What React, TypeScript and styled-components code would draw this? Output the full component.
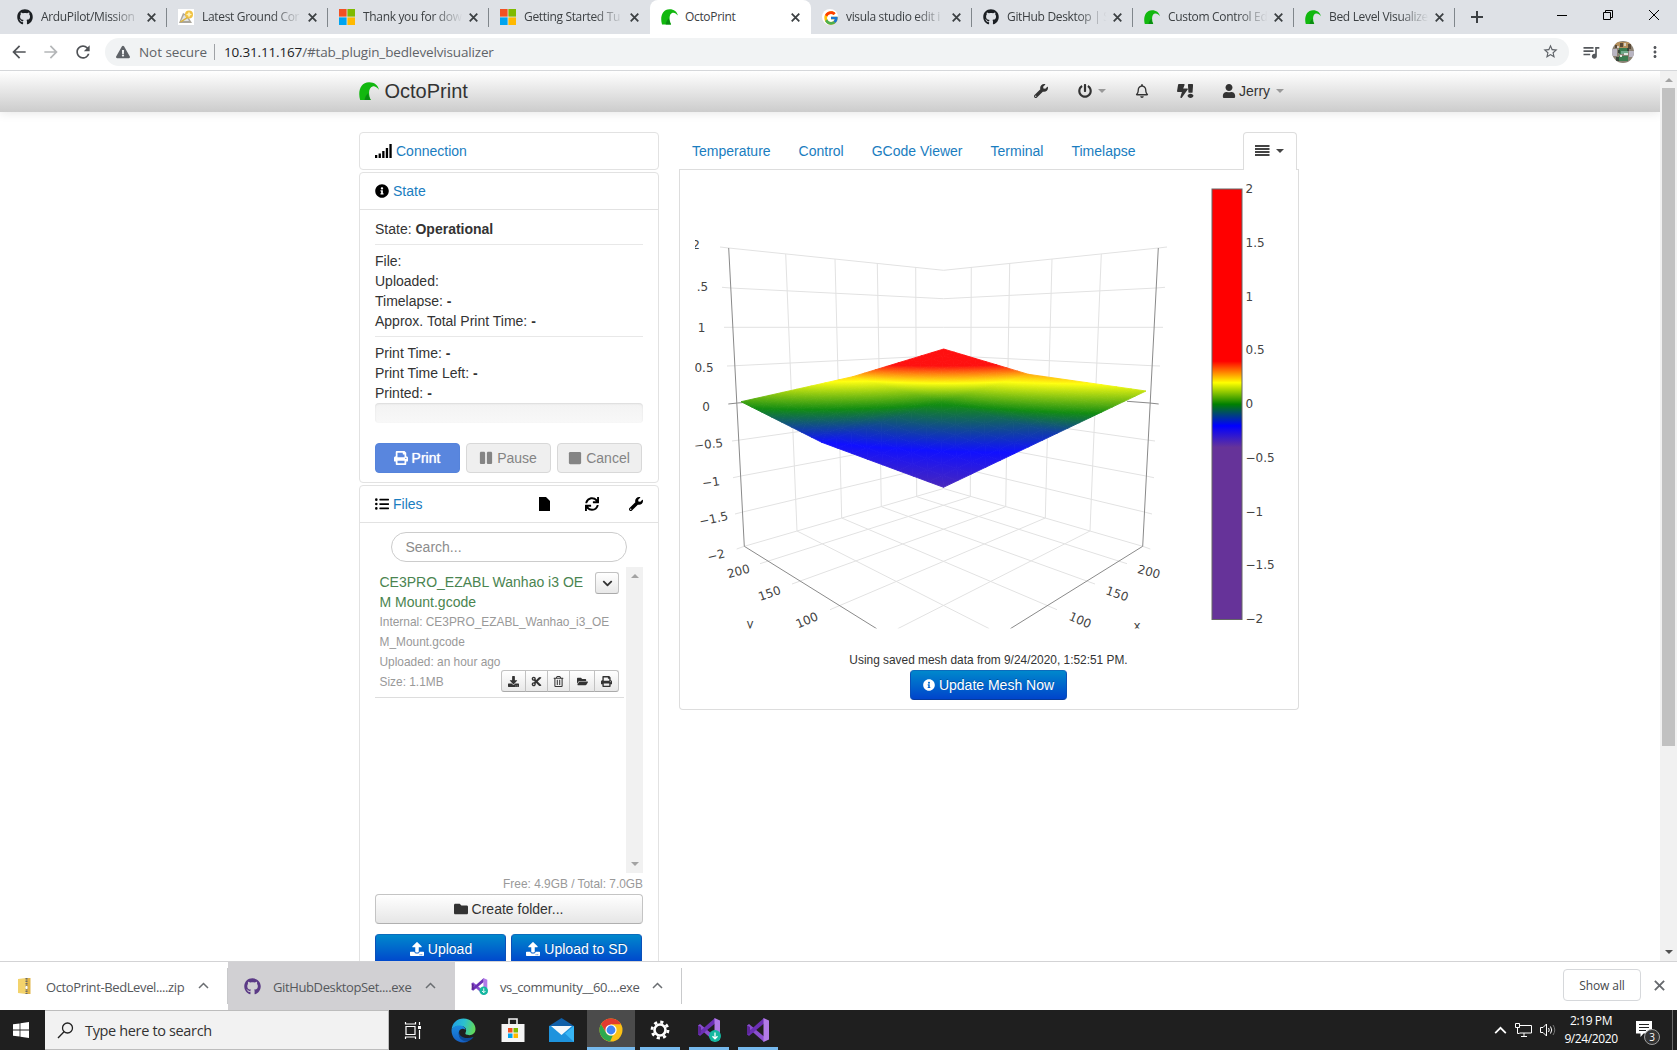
import React from 'react';
import styled, { createGlobalStyle, css } from 'styled-components';
import {
  FaBolt, FaChevronDown, FaCut, FaDownload, FaExclamation, FaExclamationTriangle,
  FaFolder, FaFolderOpen, FaGithub, FaInfoCircle, FaListUl, FaPause, FaPowerOff, FaPrint,
  FaRegBell, FaRegTrashAlt, FaStop, FaSync, FaUpload, FaUser, FaWrench,
} from 'react-icons/fa';
import {
  MdArrowBack, MdArrowForward, MdMoreVert, MdOutlineQueueMusic, MdRefresh, MdStarBorder,
} from 'react-icons/md';
import { FcGoogle } from 'react-icons/fc';

const GlobalStyle = createGlobalStyle`
  *, *::before, *::after { box-sizing: border-box; }
  html, body { margin: 0; padding: 0; overflow: hidden; background: #fff; }
  svg { display: block; flex: none; }
`;

const SYSTEM_FONT = `"Open Sans", "Noto Sans", sans-serif`;
const PAGE_FONT = `"Liberation Sans", Arial, sans-serif`;
const LINK = '#1a7dc0';

const Screen = styled.div`
  width: 1677px;
  height: 1050px;
  display: flex;
  flex-direction: column;
  overflow: hidden;
  font-family: ${SYSTEM_FONT};
`;

/* ---------- Browser frame ---------- */

const TabStrip = styled.div`
  height: 34px;
  flex: none;
  display: flex;
  padding-left: 6px;
  background: #dee1e6;
`;

const BrowserTab = styled.div<{ $active?: boolean; $divider?: boolean }>`
  position: relative;
  width: 161px;
  height: 34px;
  flex: none;
  display: flex;
  align-items: center;
  padding-left: 11px;
  ${p => p.$active && css`
    background: #fff;
    border-radius: 8px 8px 0 0;
  `}
  ${p => p.$divider && css`
    &::after {
      content: '';
      position: absolute;
      right: 0;
      top: 8px;
      width: 1px;
      height: 19px;
      background: #80868b;
    }
  `}
`;

const Favicon = styled.div`
  width: 24px;
`;

const TabTitle = styled.span<{ $fade?: boolean }>`
  width: 105.5px;
  white-space: nowrap;
  font-size: 12px;
  line-height: 18px;
  letter-spacing: -0.33px;
  color: #3c4043;
  ${p => p.$fade && css`mask-image: linear-gradient(90deg, #000 66%, transparent 94%);`}
`;

const NewTab = styled.div`
  width: 43px;
  display: flex;
  align-items: center;
  justify-content: center;
`;

const WindowControls = styled.div`
  margin-left: auto;
  display: flex;
  height: 29px;
`;

const WindowControl = styled.div`
  width: 46px;
  display: flex;
  align-items: center;
  justify-content: center;
`;

const Toolbar = styled.div`
  height: 37px;
  flex: none;
  display: flex;
  align-items: center;
  padding: 0 5px 1px 8px;
  border-bottom: 1px solid #d5d7da;
  background: #fff;
  color: #55585c;
`;

const NavIcon = styled.div<{ $dim?: boolean }>`
  width: 32px;
  display: flex;
  padding-left: 1px;
  color: ${p => (p.$dim ? '#b4b6b8' : '#505357')};
  svg { width: 20px; height: 20px; }
`;

const Omnibox = styled.div`
  width: 1464px;
  height: 28px;
  flex: none;
  margin-left: 1px;
  display: flex;
  align-items: center;
  padding: 0 10px 0 11px;
  border-radius: 14px;
  background: #f1f3f4;
  font-size: 14px;
  color: #5f6368;
`;

const Secure = styled.span`
  margin-left: 9px;
  padding-right: 7px;
  line-height: 16px;
  font-size: 13.5px;
  letter-spacing: -0.05px;
  border-right: 1px solid #9fa2a6;
`;

const Url = styled.span`
  margin-left: 9px;
  flex: 1;
  font-size: 13.5px;
  letter-spacing: -0.16px;
  b { font-weight: 400; color: #202124; }
`;

const ToolbarIcon = styled.div`
  width: 32px;
  display: flex;
  justify-content: center;
`;

const ToolbarActions = styled.div`
  margin-left: 6px;
  display: flex;
  align-items: center;
`;

/* ---------- OctoPrint page ---------- */

const Viewport = styled.div`
  height: 890px;
  flex: none;
  display: flex;
  overflow: hidden;
  font: 14px/20px ${PAGE_FONT};
  color: #333;
`;

const Page = styled.div`
  width: 1660px;
  flex: none;
`;

const Navbar = styled.div`
  height: 41px;
  padding: 0 0 1px 359px;
  display: flex;
  align-items: center;
  background: linear-gradient(#fff, #cccccc);
  box-shadow: 0 1px 10px rgba(0, 0, 0, 0.1);
`;

const Brand = styled.div`
  width: 662px;
  display: flex;
  align-items: center;
  gap: 5.5px;
  font-size: 20px;
`;

const NavItem = styled.div<{ $width: number }>`
  width: ${p => p.$width}px;
  display: flex;
  align-items: center;
  gap: 3px;
  padding-left: 13px;
  svg { height: 14px; width: auto; }
`;

const BoltPair = styled.div`
  display: flex;
  margin-left: -1px;
  svg:first-child { width: 11px; }
  svg:last-child { width: 7px; margin-left: -1px; }
`;

const Caret = styled.i<{ $color: string; $gap?: number }>`
  width: 0;
  height: 0;
  margin-left: ${p => p.$gap ?? 0}px;
  border: 4px solid transparent;
  border-top-color: ${p => p.$color};
  border-bottom: 0;
`;

const Container = styled.div`
  width: 940px;
  margin: 20px 0 0 359px;
  display: flex;
  align-items: flex-start;
  gap: 20px;
`;

const Sidebar = styled.div`
  width: 300px;
  display: flex;
  flex-direction: column;
  gap: 2px;
`;

const Group = styled.section`
  border: 1px solid #e2e2e2;
  border-radius: 4px;
`;

const GroupHeading = styled.div`
  height: 36px;
  display: flex;
  align-items: center;
  gap: 4px;
  padding: 0 15px;
  color: ${LINK};
  svg { height: 14px; width: auto; color: #000; }
`;

const HeadingActions = styled.div`
  margin-left: auto;
  display: flex;
  align-items: center;
  svg:nth-child(1) { margin-right: 35px; }
  svg:nth-child(2) { margin-right: 30px; }
`;

const GroupBody = styled.div`
  padding: 9px 15px;
  border-top: 1px solid #e2e2e2;
`;

const Rule = styled.hr`
  margin: 5px 0 6px;
  border: 0;
  border-top: 1px solid #e8e8e8;
`;

const Line = styled.div`
  height: 20px;
`;

const Progress = styled.div`
  height: 20px;
  margin-bottom: 20px;
  border-radius: 4px;
  background: linear-gradient(#f3f3f3, #f8f8f8);
  box-shadow: inset 0 1px 2px rgba(0, 0, 0, 0.1);
`;

const Row = styled.div<{ $gap: number; $top?: number }>`
  display: flex;
  gap: ${p => p.$gap}px;
  margin-top: ${p => p.$top ?? 0}px;
`;

const Button = styled.button<{ $kind: 'primary' | 'default' | 'primaryOff' | 'off'; $width: number; $icon?: number }>`
  width: ${p => p.$width}px;
  height: 30px;
  display: flex;
  align-items: center;
  justify-content: center;
  gap: 4px;
  padding: 0 1px 0 0;
  border: 1px solid #c4c4c4;
  border-bottom-color: #b0b0b0;
  border-radius: 4px;
  font: 14px/20px ${PAGE_FONT};
  svg { height: ${p => p.$icon ?? 14}px; width: auto; }
  ${p => p.$kind === 'primary' && css`
    padding: 0 0 0 1px;
    color: #fff;
    border-color: #0b6cbd #0a50b8 #063a9c;
    background: linear-gradient(#0088cc, #0044cc);
    text-shadow: 0 -1px 0 rgba(0, 0, 0, 0.25);
  `}
  ${p => p.$kind === 'default' && css`
    color: #333;
    background: linear-gradient(#fff, #e6e6e6);
  `}
  ${p => p.$kind === 'primaryOff' && css`
    color: #fff;
    border-color: #5583db;
    background: #5986de;
    text-shadow: 0 0 1px #fff;
  `}
  ${p => p.$kind === 'off' && css`
    color: #848484;
    border-color: #d8d8d8;
    background: #efefef;
  `}
`;

const FilesBody = styled.div`
  padding: 9px 15px 0;
  border-top: 1px solid #e2e2e2;
`;

const Search = styled.div`
  width: 236px;
  height: 30px;
  margin: 0 auto 5px 16px;
  padding: 4px 13.5px;
  border: 1px solid #ccc;
  border-radius: 15px;
  color: #8c8c8c;
`;

const FileScroller = styled.div`
  height: 306px;
  display: flex;
  justify-content: space-between;
`;

const FileEntry = styled.div`
  width: 249px;
  height: 131px;
  padding: 5px 5px 0 4.5px;
  border-bottom: 1px solid #ddd;
`;

const EntryTop = styled.div`
  display: flex;
  justify-content: space-between;
`;

const FileName = styled.div`
  white-space: nowrap;
  color: #4a8450;
`;

const Meta = styled.div`
  font-size: 11.9px;
  white-space: nowrap;
  color: #999;
`;

const MiniButton = styled.div<{ $width: number }>`
  width: ${p => p.$width}px;
  height: 22px;
  display: flex;
  align-items: center;
  justify-content: center;
  color: #333;
  border: 1px solid #c2c2c2;
  border-bottom-color: #aaa;
  background: linear-gradient(#fff, #e8e8e8);
  svg { height: 11px; width: auto; }
`;

const SingleMini = styled(MiniButton)`
  border-radius: 3px;
`;

const MiniGroup = styled.div`
  display: flex;
  margin-top: -2px;
  ${MiniButton} + ${MiniButton} { margin-left: -1px; }
  ${MiniButton}:first-child { border-radius: 3px 0 0 3px; }
  ${MiniButton}:last-child { border-radius: 0 3px 3px 0; }
`;

const Track = styled.div<{ $pad: string }>`
  width: 17px;
  height: 100%;
  display: flex;
  flex-direction: column;
  align-items: center;
  justify-content: space-between;
  padding: ${p => p.$pad};
  background: #f1f1f1;
`;

const Arrow = styled.i<{ $up?: boolean; $color: string }>`
  width: 0;
  height: 0;
  border: 4px solid transparent;
  ${p => (p.$up
    ? css`border-top: 0; border-bottom-color: ${p.$color};`
    : css`border-bottom: 0; border-top-color: ${p.$color};`)}
`;

const FreeSpace = styled.div`
  height: 21px;
  padding-top: 1px;
  font-size: 11.9px;
  text-align: right;
  color: #999;
`;

const Main = styled.div`
  width: 620px;
`;

const TabBar = styled.div`
  display: flex;
  height: 38px;
  border-bottom: 1px solid #ddd;
`;

const PageTab = styled.a`
  padding: 9px 13px;
  margin-right: 2px;
  color: ${LINK};
`;

const MenuTab = styled.div`
  width: 54px;
  height: 38px;
  margin: 0 2px 0 auto;
  display: flex;
  align-items: center;
  gap: 6px;
  padding: 0 0 2px 11px;
  color: #444;
  border: 1px solid #ddd;
  border-bottom: 0;
  border-radius: 4px 4px 0 0;
  background: #fff;
`;

const TabContent = styled.div`
  height: 540px;
  display: flex;
  flex-direction: column;
  align-items: center;
  border: 1px solid #ddd;
  border-top: 0;
  border-radius: 0 0 4px 4px;
`;

const MeshFooter = styled.div`
  width: 616px;
  margin-right: 2px;
  display: flex;
  flex-direction: column;
  align-items: center;
`;

const MeshStatus = styled.div`
  height: 20px;
  padding-left: 1px;
  font-size: 11.9px;
`;

const PageTrack = styled.div`
  width: 17px;
  display: flex;
  flex-direction: column;
  align-items: center;
  padding: 7px 0 7px;
  background: #f1f1f1;
`;

const PageThumb = styled.div`
  width: 13px;
  height: 658px;
  margin: 6px 0 auto;
  background: #c1c1c1;
`;

/* ---------- Download shelf ---------- */

const Shelf = styled.div`
  height: 49px;
  flex: none;
  display: flex;
  border-top: 1px solid #d3d3d5;
  background: #fff;
`;

const Download = styled.div<{ $hover?: boolean; $width: number }>`
  width: ${p => p.$width}px;
  display: flex;
  align-items: center;
  padding: 0 0 0 16px;
  font-size: 13px;
  color: #55585c;
  background: ${p => (p.$hover ? '#d1d0d3' : 'transparent')};
`;

const DownloadName = styled.span`
  width: 140px;
  margin: 1px 12px 0 12px;
  white-space: nowrap;
  letter-spacing: -0.38px;
`;

const ShelfDivider = styled.i`
  width: 1px;
  height: 36px;
  margin-top: 6px;
  background: #c9cacc;
`;

const ShowAll = styled.div`
  width: 78px;
  height: 32px;
  margin: 7px 12px 0 auto;
  display: flex;
  align-items: center;
  justify-content: center;
  border: 1px solid #d6d8db;
  border-radius: 4px;
  font-size: 12px;
  letter-spacing: -0.1px;
  color: #45484c;
`;

const ShelfClose = styled.div`
  width: 24px;
  padding: 18px 0 0 1px;
`;

/* ---------- Task bar ---------- */

const TaskBar = styled.div`
  height: 40px;
  flex: none;
  display: flex;
  background: #1f1f1f;
  color: #fff;
`;

const StartButton = styled.div`
  width: 45px;
  display: flex;
  align-items: center;
  padding-left: 13px;
`;

const TaskSearch = styled.div`
  width: 344px;
  display: flex;
  align-items: center;
  gap: 11px;
  padding-left: 12px;
  border: 1px solid #bdbdbd;
  border-left: 0;
  background: #f2f2f2;
  font-size: 14.5px;
  letter-spacing: -0.35px;
  color: #333;
`;

const TaskIcon = styled.div<{ $width?: number; $state?: 'active' | 'open' }>`
  width: ${p => p.$width ?? 49}px;
  display: flex;
  align-items: center;
  justify-content: center;
  ${p => p.$state === 'active' && css`
    background: #4b4b4b;
    box-shadow: inset 0 -3px 0 #76b9ed;
  `}
  ${p => p.$state === 'open' && css`
    background: linear-gradient(#76b9ed, #76b9ed) center bottom / 40px 3px no-repeat;
  `}
`;

const Tray = styled.div`
  margin-left: auto;
  display: flex;
  align-items: center;
  gap: 8px;
`;

const Clock = styled.div`
  width: 66px;
  margin: 0 4px 0 -7px;
  text-align: center;
  font-size: 12px;
  line-height: 18px;
  letter-spacing: -0.4px;
  white-space: nowrap;
`;

const Notice = styled.div`
  position: relative;
  width: 28px;
  height: 18px;
`;

const NoticeBadge = styled.span`
  position: absolute;
  left: 8px;
  top: 8px;
  width: 16px;
  height: 16px;
  border: 1px solid #a0a0a0;
  border-radius: 50%;
  background: #333;
  font-size: 10px;
  line-height: 14px;
  text-align: center;
`;

const DesktopEdge = styled.i`
  width: 5px;
  height: 40px;
  border-left: 1px solid #6b6b6b;
`;

/* ---------- Drawings ---------- */

const OctoLogo = ({ size = 20 }: { size?: number }) => (
  <svg width={size} height={size * 0.92} viewBox="0 0 20 18.4">
    <path
      d="M1.200 18.200C-1.500 9.500 1.600.3 10 .2c5-.1 9 2.600 9.900 7.600-1.900-2.700-4.200-3.900-6.300-3.400-3.900 1-4.700 7.300-1.700 13.800z"
      fill="#12b80f"
    />
    <path d="M5.500 18.200c.4-2.600 1.500-5 3.800-7.200.1 2.800 1 5 2.600 7.200z" fill="#0a8c12" />
  </svg>
);

const Cross = ({ size, color, weight }: { size: number; color: string; weight: number }) => (
  <svg width={size} height={size} viewBox="0 0 10 10">
    <path d="m.8.8 8.400 8.400M9.200.8.8 9.200" stroke={color} strokeWidth={weight} />
  </svg>
);

const SignalBars = () => (
  <svg viewBox="0 0 17 14" fill="currentColor">
    <path d="M0 11h2.300v3H0zM3.600 9.500h2.300V14H3.600zM7.200 7h2.300v7H7.200zM10.800 4h2.300v10h-2.300zM14.400 0h2.300v14h-2.300z" />
  </svg>
);

const MicrosoftLogo = () => (
  <svg width="16" height="16" viewBox="0 0 16 16">
    <path fill="#f25022" d="M0 0h7.600v7.600H0z" />
    <path fill="#7fba00" d="M8.400 0H16v7.600H8.400z" />
    <path fill="#00a4ef" d="M0 8.400h7.600V16H0z" />
    <path fill="#ffb900" d="M8.400 8.400H16V16H8.400z" />
  </svg>
);

const GroundIcon = () => (
  <svg width="16" height="16" viewBox="0 0 16 16">
    <path fill="#fff" d="M0 0h16v16H0z" />
    <path fill="#aaa69c" d="M1 14 5 4l4 2 5 8z" />
    <path fill="#dfe3e8" d="m3 12 3-6 2 1 3 5z" />
    <circle cx="11" cy="5.500" r="4" fill="#f0c244" />
    <path fill="#fff3b8" d="m11 2.500 1 2 2 1-2 1-1 2-1-2-2-1 2-1z" />
    <path fill="#d9b23c" d="M2 12.500 9 8l1 1-7 4.500z" />
  </svg>
);

const GoogleLogo = () => (
  <svg width="16" height="16" viewBox="0 0 16 16">
    <circle cx="8" cy="8" r="8" fill="#fff" />
    <FcGoogle x="1" y="1" width="14" height="14" />
  </svg>
);

const MenuBars = () => (
  <svg width="15" height="11" viewBox="0 0 15 11" fill="currentColor">
    <path d="M0 0h14.500v2H0zM0 3h14.500v2H0zM0 6h14.500v2H0zM0 9h14.500v2H0z" />
  </svg>
);

const FileSheet = () => (
  <svg viewBox="0 0 11 14" fill="currentColor">
    <path d="M0 0h7l4 4v10H0z" />
  </svg>
);

const Avatar = () => (
  <svg width="22" height="22" viewBox="0 0 22 22">
    <defs><clipPath id="avatar"><circle cx="11" cy="11" r="11" /></clipPath></defs>
    <g clipPath="url(#avatar)">
      <path fill="#8b8274" d="M0 0h22v22H0z" />
      <path fill="#b48f5c" d="M3 1h16v6H3z" />
      <path fill="#5b4a36" d="M8 2h3v4H8zM16 3h3v5h-3zM3 4h2v3H3z" />
      <path fill="#d7cfc0" d="M12 2h2v3h-2zM5 5h2v2H5z" />
      <path fill="#b9b5c2" d="M0 8h5v7H0zM17 10h5v6h-5z" />
      <path fill="#3b7d4f" d="M7 7h9v6H7zM7 15h9v5H7z" />
      <path fill="#72a98b" d="M9 10h7v3H9z" />
      <path fill="#dfe8e1" d="M12 12h4v2h-4zM8 14h2v2H8z" />
      <path fill="#39463b" d="M4 16h3v4H4zM15 7h2v3h-2zM6 9h2v3H6z" />
    </g>
  </svg>
);

const ChevronUp = ({ color, size = 11 }: { color: string; size?: number }) => (
  <svg width={size} height={size * 0.64} viewBox="0 0 11 7">
    <path d="m1 6 4.500-4.500L10 6" fill="none" stroke={color} strokeWidth="1.500" />
  </svg>
);

const VisualStudio = ({ size, installer }: { size: number; installer?: boolean }) => (
  <svg width={size} height={size} viewBox="0 0 24 24">
    <path fill="#8a4fd0" d="M1 7.500 3 6l15 12.500V24L1 9z" />
    <path fill="#6b2fb5" d="M1 16.500 3 18 18 5.500V0L1 15z" />
    <path fill="#5c2596" d="M1 7.500 4 9v6l-3 1.500z" />
    <path fill="#b27be8" d="m17.500 0 5.500 2.500v19L17.500 24z" />
    {installer && (
      <>
        <circle cx="18" cy="18" r="6" fill="#14b8a0" />
        <path d="M18 14.500v6M15.500 18.300l2.500 2.500 2.500-2.500" stroke="#fff" strokeWidth="1.300" fill="none" />
      </>
    )}
  </svg>
);

const ZipIcon = () => (
  <svg width="18" height="18" viewBox="0 0 18 18">
    <path fill="#f3d36c" d="M2 2 10 1v16l-8-1z" />
    <path fill="#e0b548" d="M10 1h4.500v16H10z" />
    <path stroke="#6a6a6a" strokeWidth="2" strokeDasharray="1.500 1" d="M10.500 1v16" />
    <path fill="#fff" d="M9.500 9h2v3h-2z" />
  </svg>
);

const EdgeLogo = () => (
  <svg width="25" height="25" viewBox="0 0 25 25">
    <defs>
      <linearGradient id="edgeTop" x1="0" x2="1" y1="0.300" y2="0.500">
        <stop offset="0" stopColor="#1f9fe6" /><stop offset="0.5" stopColor="#2cc0cf" /><stop offset="1" stopColor="#62d957" />
      </linearGradient>
      <linearGradient id="edgeLow" x1="0" x2="0" y1="0" y2="1">
        <stop offset="0" stopColor="#1b8be0" /><stop offset="1" stopColor="#1560c4" />
      </linearGradient>
    </defs>
    <path d="M.6 12C1 5 6 .5 12.500.5c7.500 0 12 5.500 12 10.500 0 4-3 6.200-6 6.200-2.500 0-4.800-1-4-2.400 1.600-2.600.5-6.300-4-6.800C6 7.600 2 9 .6 12z" fill="url(#edgeTop)" />
    <path d="M.5 12.500C1.500 8.500 6 7 9.500 7.500c3 .4 5 2.300 5 4.500C12.500 9.800 9 10.500 8 13.500 7 18 10.500 23 17.500 23.300 9 27 .5 21.500.5 12.500z" fill="url(#edgeLow)" />
    <path d="M8.300 13c-1.300 5 5.200 9 14.200 6-1.700 2.500-4 4-6.500 4.600C10 23.500 6 18 8.300 13z" fill="#0d4a98" />
  </svg>
);

const StoreLogo = () => (
  <svg width="24" height="26" viewBox="0 0 24 26">
    <path d="M8 8V2h8v6" fill="none" stroke="#f2f2f2" strokeWidth="1.600" />
    <path fill="#f5f5f5" d="M.5 7h23v18H.5z" />
    <path fill="#f25022" d="M7 11h4.500v4.500H7z" /><path fill="#7fba00" d="M12.500 11H17v4.500h-4.500z" />
    <path fill="#00a4ef" d="M7 16.500h4.500V21H7z" /><path fill="#ffb900" d="M12.500 16.500H17V21h-4.500z" />
  </svg>
);

const MailLogo = () => (
  <svg width="25" height="24" viewBox="0 0 25 24">
    <path fill="#0f5fa8" d="M0 8 12.500 0 25 8v3H0z" />
    <path fill="#1e93dd" d="M0 8h25v16H0z" />
    <path fill="#f4f8fb" d="M2 8h21l-10.500 9z" />
    <path fill="#37b5f5" d="m25 8-9 7.500L25 24z" />
  </svg>
);

const ChromeLogo = () => (
  <svg width="24" height="24" viewBox="0 0 24 24">
    <circle cx="12" cy="12" r="11.500" fill="#fbc116" />
    <path fill="#e33b2e" d="M2 6.200A11.500 11.500 0 0 1 22 6.300H12L7.200 14.700z" />
    <path fill="#2da94f" d="M2 6.200 7.200 15a5.600 5.600 0 0 0 6.600 2.400l-2.700 6A11.500 11.500 0 0 1 2 6.200z" />
    <circle cx="12" cy="12" r="5.600" fill="#fff" /><circle cx="12" cy="12" r="4.400" fill="#4285f4" />
  </svg>
);

/* ---------- Bed mesh plot ---------- */

type Vertex = [number, number, number];
type Segment = [number, number, number, number];

const MIRROR = 1887;

// screen x, screen y and height of the 3x3 probe points
const MESH: Vertex[][] = [
  [[741, 401.7, 0.04], [852.7, 376.7, 0.24], [943.7, 349, 0.62]],
  [[821.7, 442.3, -0.2], [942, 402, 0.015], [1028.3, 374.3, 0.27]],
  [[943.5, 487.3, -0.33], [1057, 433.3, -0.13], [1146, 391, 0.15]],
];

const SCALE: [number, string][] = [
  [-0.4, '#663399'], [-0.2, '#1010ff'], [0, '#128c12'], [0.2, '#ffff10'], [0.4, '#ff1010'],
];

const mix = (a: Vertex, b: Vertex, t: number): Vertex => [
  a[0] + (b[0] - a[0]) * t, a[1] + (b[1] - a[1]) * t, a[2] + (b[2] - a[2]) * t,
];

const triangles: Vertex[][] = [];
const STEPS = 8;
for (let i = 0; i < 2; i++) {
  for (let j = 0; j < 2; j++) {
    const at = (u: number, v: number) =>
      mix(mix(MESH[i][j], MESH[i][j + 1], u), mix(MESH[i + 1][j], MESH[i + 1][j + 1], u), v);
    for (let p = 0; p < STEPS; p++) {
      for (let q = 0; q < STEPS; q++) {
        const a = at(p / STEPS, q / STEPS);
        const b = at((p + 1) / STEPS, q / STEPS);
        const c = at((p + 1) / STEPS, (q + 1) / STEPS);
        const d = at(p / STEPS, (q + 1) / STEPS);
        triangles.push([a, b, d], [b, c, d]);
      }
    }
  }
}

const shade = ([a, b, c]: Vertex[]) => {
  const det = (b[0] - a[0]) * (c[1] - a[1]) - (c[0] - a[0]) * (b[1] - a[1]);
  const gx = ((b[2] - a[2]) * (c[1] - a[1]) - (c[2] - a[2]) * (b[1] - a[1])) / det;
  const gy = ((c[2] - a[2]) * (b[0] - a[0]) - (b[2] - a[2]) * (c[0] - a[0])) / det;
  const n = gx * gx + gy * gy;
  const low = (-0.4 - a[2]) / n;
  const high = (0.4 - a[2]) / n;
  return { x1: a[0] + gx * low, y1: a[1] + gy * low, x2: a[0] + gx * high, y2: a[1] + gy * high };
};

const Surface = () => (
  <g>
    <defs>
      {triangles.map((t, i) => (
        <linearGradient key={i} id={`face${i}`} gradientUnits="userSpaceOnUse" {...shade(t)}>
          {SCALE.map(([z, color]) => <stop key={z} offset={(z + 0.4) / 0.8} stopColor={color} />)}
        </linearGradient>
      ))}
    </defs>
    {triangles.map((t, i) => (
      <polygon
        key={i}
        points={t.map(v => `${v[0]},${v[1]}`).join(' ')}
        fill={`url(#face${i})`}
        stroke={`url(#face${i})`}
        strokeWidth="0.900"
        strokeLinejoin="round"
      />
    ))}
  </g>
);

const HALF_GRID: Segment[] = [
  [720, 247, 728.7, 248], [728.7, 248, 943.5, 270.3],
  [722, 287.3, 730.7, 288], [730.7, 288, 943.5, 298.7],
  [724, 327.3, 943.5, 327.3],
  [727, 366, 735.3, 365.7], [735.3, 365.7, 943.5, 355.5],
  [732, 441, 739.7, 440], [739.7, 440, 943.5, 411],
  [733, 477.7, 741, 476], [741, 476, 943.5, 438],
  [735, 514, 742.7, 512], [742.7, 512, 943.5, 464],
  [736.7, 549, 744.3, 546.3], [744.3, 546.3, 943.5, 488.5],
  [785.7, 254, 797, 531], [835, 259, 841.7, 518], [877.3, 263.3, 881.3, 506.7], [915.7, 267, 916.7, 496.7],
  [760, 563.7, 970.3, 496.7], [792, 584, 1005.7, 506.7], [830, 609.7, 1045.3, 518], [897.7, 628.7, 1090, 531],
];

const HALF_AXES: Segment[] = [
  [728.7, 248, 744.3, 546.3], [744.3, 546.3, 876.7, 628.7], [728.3, 404, 737.3, 403], [737.3, 403, 760, 401.3],
];

const mirrored = (list: Segment[]): Segment[] =>
  list.flatMap(([a, b, c, d]) => [[a, b, c, d], [MIRROR - a, b, MIRROR - c, d]] as Segment[]);

const PLOT_LABELS: [string, number, number, number][] = [
  ['2', 696, 245, 0], ['.5', 702.5, 286.8, 0], ['1', 701.5, 327.7, 0], ['0.5', 704, 367.3, 0],
  ['0', 706, 406.5, 0], ['−0.5', 708.5, 444, -6], ['−1', 711, 482, -8], ['−1.5', 713.5, 518.5, -12],
  ['−2', 716, 555, -14], ['200', 738.3, 571, -15], ['150', 769.5, 593, -19], ['100', 806.7, 620, -23],
  ['200', 1149, 571.5, 15], ['150', 1117.3, 593.5, 19], ['100', 1080.3, 620, 23],
  ['y', 750, 623.5, 0], ['x', 1137, 626, 0],
];

const BAR_LABELS = ['2', '1.5', '1', '0.5', '0', '−0.5', '−1', '−1.5', '−2'];

const TickText = styled.text`
  font: 12px "DejaVu Sans", Verdana, sans-serif;
  fill: #444;
`;

const MeshPlot = () => (
  <svg width="618" height="480" viewBox="680 170 618 480">
    <defs>
      <clipPath id="scene"><rect x="695" y="179" width="520" height="449.500" /></clipPath>
      <linearGradient id="bar" x1="0" x2="0" y1="0" y2="1">
        <stop offset="0.4" stopColor="#f00" /><stop offset="0.45" stopColor="#ff0" />
        <stop offset="0.5" stopColor="#008000" /><stop offset="0.55" stopColor="#00f" />
        <stop offset="0.6" stopColor="#663399" />
      </linearGradient>
    </defs>
    <g clipPath="url(#scene)">
      {mirrored(HALF_GRID).map(([x1, y1, x2, y2], i) => (
        <line key={i} x1={x1} y1={y1} x2={x2} y2={y2} stroke="#e2e2e2" />
      ))}
      {mirrored(HALF_AXES).map(([x1, y1, x2, y2], i) => (
        <line key={i} x1={x1} y1={y1} x2={x2} y2={y2} stroke="#8a8a8a" />
      ))}
      <Surface />
      {PLOT_LABELS.map(([text, x, y, turn], i) => (
        <TickText key={i} textAnchor="middle" transform={`translate(${x} ${y}) rotate(${turn}) translate(0 4.400)`}>
          {text}
        </TickText>
      ))}
    </g>
    <rect x="1212" y="189" width="30" height="430.500" fill="url(#bar)" stroke="#666" />
    {BAR_LABELS.map((text, i) => (
      <TickText key={text} x="1245.500" y={193 + i * 53.77}>{text}</TickText>
    ))}
  </svg>
);

/* ---------- Content ---------- */

const githubIcon = <FaGithub size={16} color="#1b1f23" />;
const TABS: { icon: React.ReactNode; title: string; active?: boolean; divider?: boolean }[] = [
  { icon: githubIcon, title: 'ArduPilot/Mission', divider: true },
  { icon: <GroundIcon />, title: 'Latest Ground Cor', divider: true },
  { icon: <MicrosoftLogo />, title: 'Thank you for dow', divider: true },
  { icon: <MicrosoftLogo />, title: 'Getting Started Tu' },
  { icon: <OctoLogo size={17} />, title: 'OctoPrint', active: true },
  { icon: <GoogleLogo />, title: 'visula studio edit i', divider: true },
  { icon: githubIcon, title: 'GitHub Desktop | S', divider: true },
  { icon: <OctoLogo size={16} />, title: 'Custom Control Ed', divider: true },
  { icon: <OctoLogo size={16} />, title: 'Bed Level Visualize', divider: true },
];

const Browser = () => (
  <>
    <TabStrip>
      {TABS.map(t => (
        <BrowserTab key={t.title} $active={t.active} $divider={t.divider}>
          <Favicon>{t.icon}</Favicon>
          <TabTitle $fade={!t.active}>{t.title}</TabTitle>
          <Cross size={9} color="#3c4043" weight={2} />
        </BrowserTab>
      ))}
      <NewTab>
        <svg width="12" height="12" viewBox="0 0 12 12"><path d="M6 0v12M0 6h12" stroke="#3c4043" strokeWidth="2" /></svg>
      </NewTab>
      <WindowControls>
        <WindowControl><svg width="10" height="10"><path d="M0 5.500h10" stroke="#000" /></svg></WindowControl>
        <WindowControl>
          <svg width="10" height="10" fill="none" stroke="#000"><path d="M.5 2.500h7v7h-7zM2.500 2.500v-2h7v7h-2" /></svg>
        </WindowControl>
        <WindowControl><svg width="10" height="10"><path d="m0 0 10 10M10 0 0 10" stroke="#000" /></svg></WindowControl>
      </WindowControls>
    </TabStrip>
    <Toolbar>
      <NavIcon><MdArrowBack /></NavIcon>
      <NavIcon $dim><MdArrowForward /></NavIcon>
      <NavIcon><MdRefresh /></NavIcon>
      <Omnibox>
        <FaExclamationTriangle size={14} />
        <Secure>Not secure</Secure>
        <Url><b>10.31.11.167</b>/#tab_plugin_bedlevelvisualizer</Url>
        <MdStarBorder size={17} />
      </Omnibox>
      <ToolbarActions>
        <ToolbarIcon><MdOutlineQueueMusic size={20} /></ToolbarIcon>
        <ToolbarIcon><Avatar /></ToolbarIcon>
        <ToolbarIcon><MdMoreVert size={18} /></ToolbarIcon>
      </ToolbarActions>
    </Toolbar>
  </>
);

const StatePanel = () => (
  <Group>
    <GroupHeading><FaInfoCircle />State</GroupHeading>
    <GroupBody>
      <Line>State: <strong>Operational</strong></Line>
      <Rule />
      <Line>File:</Line>
      <Line>Uploaded:</Line>
      <Line>Timelapse: <strong>-</strong></Line>
      <Line>Approx. Total Print Time: <strong>-</strong></Line>
      <Rule />
      <Line>Print Time: <strong>-</strong></Line>
      <Line>Print Time Left: <strong>-</strong></Line>
      <Line>Printed: <strong>-</strong></Line>
      <Progress />
      <Row $gap={6}>
        <Button $kind="primaryOff" $width={85}><FaPrint />Print</Button>
        <Button $kind="off" $width={85}><FaPause />Pause</Button>
        <Button $kind="off" $width={85}><FaStop />Cancel</Button>
      </Row>
    </GroupBody>
  </Group>
);

const FilesPanel = () => (
  <Group>
    <GroupHeading>
      <FaListUl />Files
      <HeadingActions><FileSheet /><FaSync /><FaWrench /></HeadingActions>
    </GroupHeading>
    <FilesBody>
      <Search>Search...</Search>
      <FileScroller>
        <FileEntry>
          <EntryTop>
            <FileName>CE3PRO_EZABL Wanhao i3 OE<br />M Mount.gcode</FileName>
            <SingleMini $width={24}><FaChevronDown /></SingleMini>
          </EntryTop>
          <Meta>Internal: CE3PRO_EZABL_Wanhao_i3_OE<br />M_Mount.gcode<br />Uploaded: an hour ago</Meta>
          <EntryTop>
            <Meta>Size: 1.1MB</Meta>
            <MiniGroup>
              <MiniButton $width={25}><FaDownload /></MiniButton>
              <MiniButton $width={23}><FaCut /></MiniButton>
              <MiniButton $width={23}><FaRegTrashAlt /></MiniButton>
              <MiniButton $width={26}><FaFolderOpen /></MiniButton>
              <MiniButton $width={25}><FaPrint /></MiniButton>
            </MiniGroup>
          </EntryTop>
        </FileEntry>
        <Track $pad="7px 0"><Arrow $up $color="#a3a3a3" /><Arrow $color="#a3a3a3" /></Track>
      </FileScroller>
      <FreeSpace>Free: 4.9GB / Total: 7.0GB</FreeSpace>
      <Button $kind="default" $width={268}><FaFolder />Create folder...</Button>
      <Row $gap={5} $top={10}>
        <Button $kind="primary" $width={131}><FaUpload />Upload</Button>
        <Button $kind="primary" $width={131}><FaUpload />Upload to SD</Button>
      </Row>
    </FilesBody>
  </Group>
);

const OctoPrint = () => (
  <Viewport>
    <Page>
      <Navbar>
        <Brand><OctoLogo />OctoPrint</Brand>
        <NavItem $width={44}><FaWrench /></NavItem>
        <NavItem $width={57}><FaPowerOff /><Caret $color="#999" $gap={3} /></NavItem>
        <NavItem $width={43}><FaRegBell /></NavItem>
        <NavItem $width={44}><BoltPair><FaBolt preserveAspectRatio="none" /><FaExclamation preserveAspectRatio="none" /></BoltPair></NavItem>
        <NavItem $width={90}><FaUser />Jerry<Caret $color="#999" $gap={3} /></NavItem>
      </Navbar>
      <Container>
        <Sidebar>
          <Group><GroupHeading><SignalBars />Connection</GroupHeading></Group>
          <StatePanel />
          <FilesPanel />
        </Sidebar>
        <Main>
          <TabBar>
            {['Temperature', 'Control', 'GCode Viewer', 'Terminal', 'Timelapse'].map(name => (
              <PageTab key={name}>{name}</PageTab>
            ))}
            <MenuTab><MenuBars /><Caret $color="#444" /></MenuTab>
          </TabBar>
          <TabContent>
            <MeshPlot />
            <MeshFooter>
              <MeshStatus>Using saved mesh data from 9/24/2020, 1:52:51 PM.</MeshStatus>
              <Button $kind="primary" $width={157} $icon={12}><FaInfoCircle />Update Mesh Now</Button>
            </MeshFooter>
          </TabContent>
        </Main>
      </Container>
    </Page>
    <PageTrack>
      <Arrow $up $color="#a3a3a3" />
      <PageThumb />
      <Arrow $color="#505050" />
    </PageTrack>
  </Viewport>
);

const Downloads = () => (
  <Shelf>
    <Download $width={227}><ZipIcon /><DownloadName>OctoPrint-BedLevel....zip</DownloadName><ChevronUp color="#6b6e72" /></Download>
    <ShelfDivider />
    <Download $width={227} $hover>
      <FaGithub size={17} color="#5b3a86" /><DownloadName>GitHubDesktopSet....exe</DownloadName><ChevronUp color="#6b6e72" />
    </Download>
    <Download $width={226}>
      <VisualStudio size={17} installer /><DownloadName>vs_community__60....exe</DownloadName><ChevronUp color="#6b6e72" />
    </Download>
    <ShelfDivider />
    <ShowAll>Show all</ShowAll>
    <ShelfClose><Cross size={11} color="#66696d" weight={1.7} /></ShelfClose>
  </Shelf>
);

const Windows = () => (
  <TaskBar>
    <StartButton>
      <svg width="16" height="16" viewBox="0 0 16 16" fill="#fff">
        <path d="M0 2.300 6.600 1.400v6.200H0zM7.400 1.300 16 0v7.600H7.400zM0 8.400h6.600v6.200L0 13.700zM7.400 8.400H16V16l-8.600-1.300z" />
      </svg>
    </StartButton>
    <TaskSearch>
      <svg width="17" height="17" viewBox="0 0 17 17" fill="none" stroke="#222" strokeWidth="1.300">
        <circle cx="10.500" cy="6" r="5" /><path d="m7 9.700-6 6.300" />
      </svg>
      Type here to search
    </TaskSearch>
    <TaskIcon $width={47}>
      <svg width="17" height="17" viewBox="0 0 17 17" fill="none" stroke="#fff" strokeWidth="1.200">
        <path d="M2 4.500h9v8H2zM1.500 0v2h10V0M1.500 17v-2h10v2M15.500 0v3M15.500 8v9" />
        <path d="M14 4h3v3h-3z" fill="#fff" stroke="none" />
      </svg>
    </TaskIcon>
    <TaskIcon $width={55}><EdgeLogo /></TaskIcon>
    <TaskIcon $width={44}><StoreLogo /></TaskIcon>
    <TaskIcon $width={52}><MailLogo /></TaskIcon>
    <TaskIcon $width={48} $state="active"><ChromeLogo /></TaskIcon>
    <TaskIcon $state="open">
      <svg width="20" height="20" viewBox="0 0 20 20" fill="none" stroke="#fff">
        <circle cx="10" cy="10" r="5.500" strokeWidth="2.600" />
        <circle cx="10" cy="10" r="8" strokeWidth="2.800" strokeDasharray="3.140 3.143" />
      </svg>
    </TaskIcon>
    <TaskIcon $state="open"><VisualStudio size={24} installer /></TaskIcon>
    <TaskIcon $state="open"><VisualStudio size={24} /></TaskIcon>
    <Tray>
      <ChevronUp color="#fff" size={13} />
      <svg width="17" height="14" viewBox="0 0 17 14" fill="none" stroke="#fff">
        <path d="M4.500 2.500h12v7.500h-12M9 10v3.500M6 13.500h6M.5.500h4v4h-4zM2.500 4.500v6h2" />
      </svg>
      <svg width="17" height="14" viewBox="0 0 17 14" fill="none" stroke="#fff">
        <path d="M.5 4.500H3L6.500 1v12L3 9.500H.5zM8.500 5q1.500 2 0 4M10.500 3.500q2.500 3.500 0 7" />
        <path d="M13 2q3.500 5 0 10" stroke="#777" />
      </svg>
      <Clock>2:19 PM<br />9/24/2020</Clock>
      <Notice>
        <svg width="16" height="16" viewBox="0 0 16 16">
          <path fill="#fff" d="M0 0h16v12.500H7.500L4.500 16v-3.500H0z" />
          <path stroke="#222" d="M3 3.500h10M3 6.500h10M3 9.500h7" />
        </svg>
        <NoticeBadge>3</NoticeBadge>
      </Notice>
      <DesktopEdge />
    </Tray>
  </TaskBar>
);

export default function App() {
  return (
    <Screen>
      <GlobalStyle />
      <Browser />
      <OctoPrint />
      <Downloads />
      <Windows />
    </Screen>
  );
}
